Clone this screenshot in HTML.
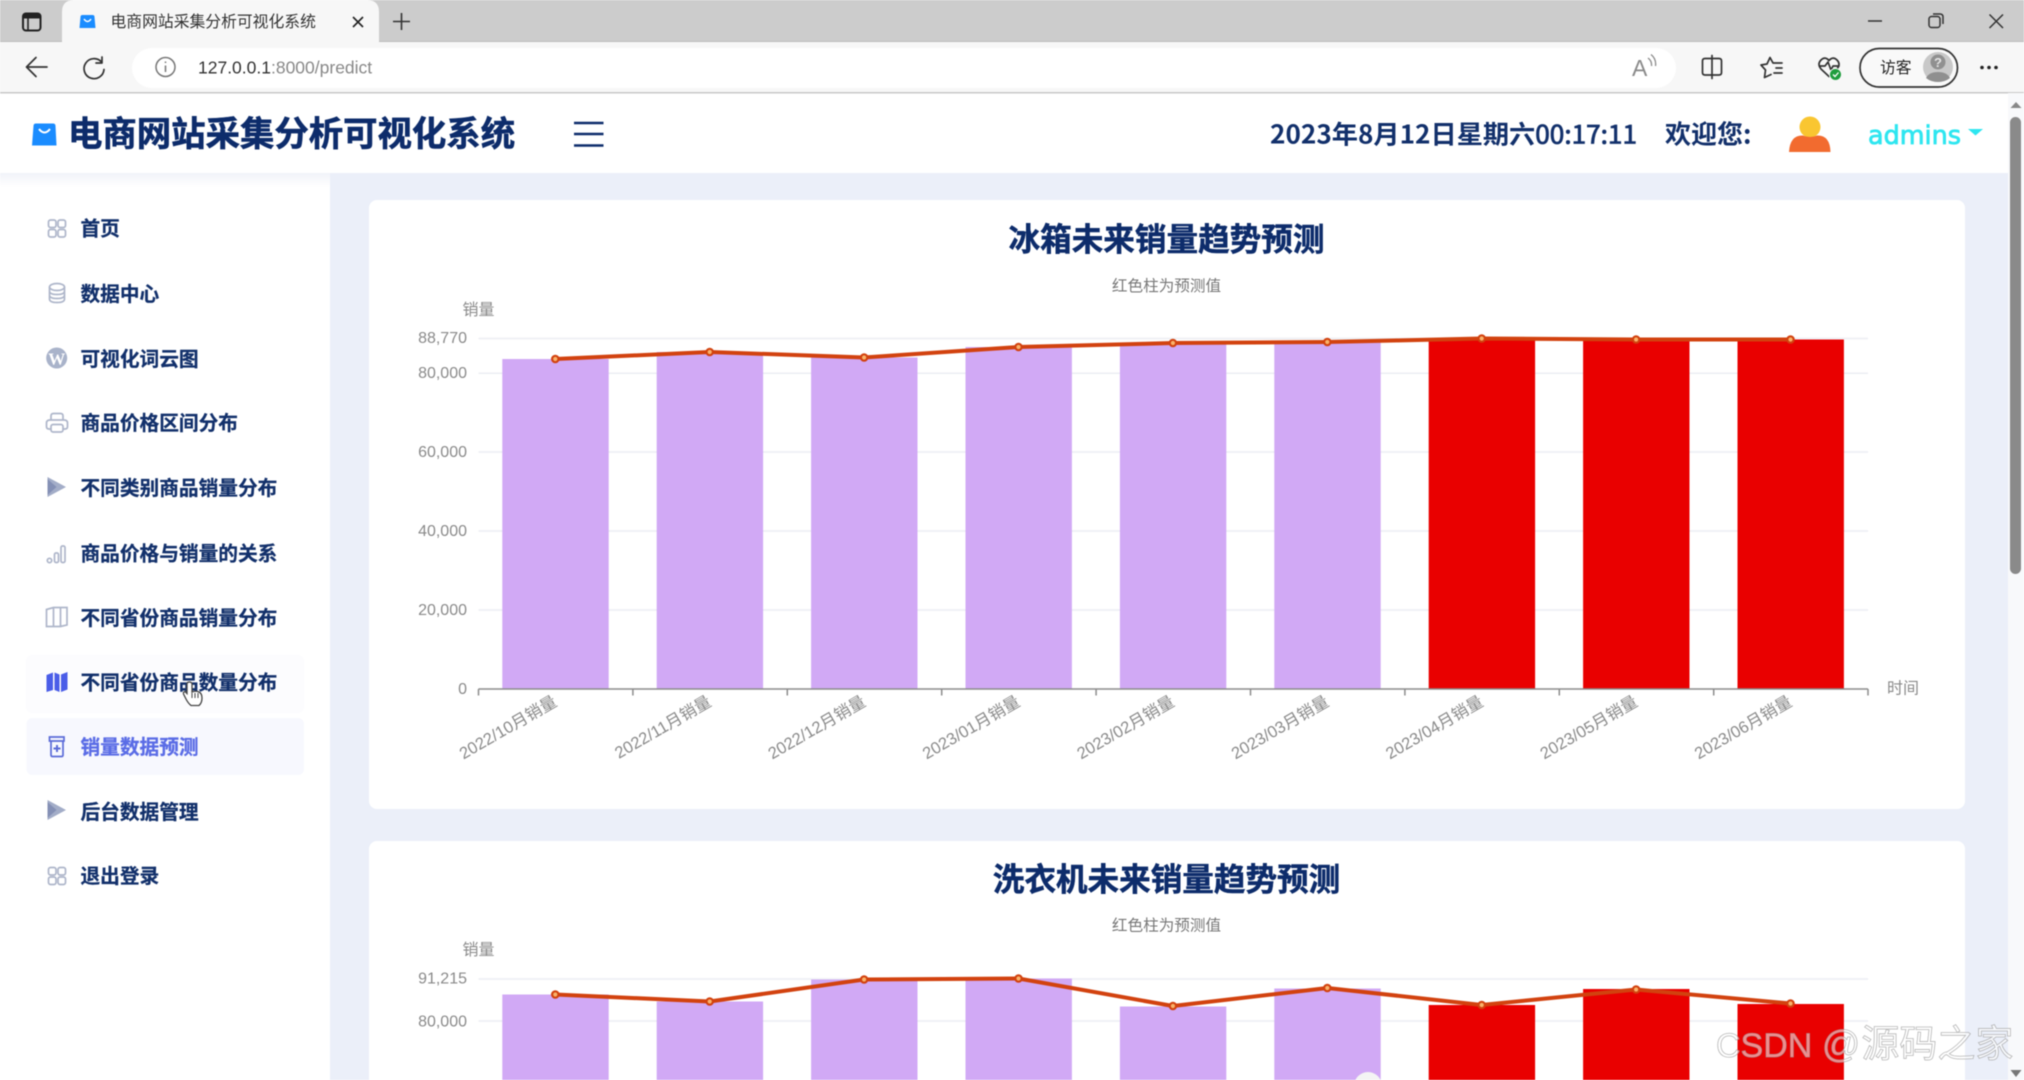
<!DOCTYPE html>
<html lang="zh-CN">
<head>
<meta charset="utf-8">
<title>电商网站采集分析可视化系统</title>
<style>
html,body{margin:0;padding:0;width:2024px;height:1080px;overflow:hidden;background:#fff}
svg{display:block;position:absolute;left:0;top:0;filter:blur(.45px)}
text{font-family:"Liberation Sans","Noto Sans CJK SC",sans-serif}
.cjk{font-family:"Noto Sans CJK SC","Liberation Sans",sans-serif}
.nav{font-family:"Noto Sans CJK SC",sans-serif;font-size:19.7px;font-weight:700;fill:#12306b;stroke:#12306b;stroke-width:.25}
.ttl{font-family:"Noto Sans CJK SC",sans-serif;font-size:31.6px;font-weight:700;fill:#0d2c6b;text-anchor:middle;stroke:#0d2c6b;stroke-width:.5}
.sub{font-size:15.6px;fill:#777;text-anchor:middle}
.ax{font-size:16px;fill:#8a8a8a}
.yl{font-size:16px;fill:#8a8a8a;text-anchor:end}
.xl{font-size:16.5px;fill:#8a8a8a;text-anchor:end}
.g{stroke:#eceef3;stroke-width:1.5}
.ic{fill:none;stroke:#aeb6ca;stroke-width:1.7}
.tb{fill:none;stroke:#333;stroke-width:1.7;stroke-linecap:round;stroke-linejoin:round}
.p{fill:#d1a9f5}.r{fill:#e90000}
.ln{fill:none;stroke:#d2420f;stroke-width:4;stroke-linejoin:round}
.d{fill:#f8b26a;stroke:#d2420f;stroke-width:2.2}
</style>
</head>
<body>
<svg width="2024" height="1080" viewBox="0 0 2024 1080" xmlns="http://www.w3.org/2000/svg">
<defs>
<linearGradient id="hs" x1="0" y1="0" x2="0" y2="1"><stop offset="0" stop-color="#f1f3f9"/><stop offset="1" stop-color="#fff"/></linearGradient>
</defs>

<!-- page background -->
<rect x="0" y="93" width="2024" height="987" fill="#ebeff9"/>
<rect x="0" y="173" width="330" height="907" fill="#fff"/>
<rect x="0" y="173" width="330" height="14" fill="url(#hs)"/>
<rect x="0" y="93" width="2008" height="80" fill="#fff"/>

<!-- browser: tab strip -->
<rect x="0" y="0" width="2024" height="42" fill="#cccccc"/>
<rect x="0" y="41" width="2024" height="1" fill="#bdbdbd"/>
<path d="M62 42V12Q62 0 74 0H367Q379 0 379 12V42Z" fill="#f7f7f7"/>
<rect x="23" y="13.500" width="17.500" height="17" rx="3" fill="none" stroke="#222" stroke-width="2"/>
<rect x="23" y="13.500" width="17.500" height="5" fill="#222"/>
<line x1="28" y1="18" x2="28" y2="30" stroke="#222" stroke-width="1.600"/>
<path d="M80.500 17Q80.500 15 82.500 15H92.500Q94.500 15 94.500 17L95.500 28H79.500Z" fill="#1a8cff"/>
<path d="M84 19Q87.500 24 91 19" fill="none" stroke="#fff" stroke-width="1.500"/>
<text class="cjk" x="110.500" y="27" font-size="15.800" fill="#333">电商网站采集分析可视化系统</text>
<path d="M353 17L363 27M363 17L353 27" stroke="#222" stroke-width="1.600" fill="none"/>
<path d="M393 21.500H410M401.500 13V30" stroke="#333" stroke-width="1.600" fill="none"/>
<path d="M1868 21H1882" stroke="#333" stroke-width="1.500"/>
<rect x="1929" y="16.500" width="11" height="11" rx="2.500" fill="none" stroke="#333" stroke-width="1.500"/>
<path d="M1933 14H1940Q1943 14 1943 17V24" fill="none" stroke="#333" stroke-width="1.500"/>
<path d="M1989.500 14.500L2003 28M2003 14.500L1989.500 28" stroke="#333" stroke-width="1.500" fill="none"/>

<!-- browser: toolbar -->
<rect x="0" y="42" width="2024" height="51" fill="#f7f7f7"/>
<rect x="0" y="92" width="2024" height="1.500" fill="#c9c9c9"/>
<path d="M47 67H27M36 57.500L26.500 67L36 76.500" class="tb" stroke-width="1.800"/>
<path d="M101.500 62A10 10 0 1 0 104 69.500M102 57V63H96" class="tb" stroke-width="1.500"/>
<rect x="132" y="48" width="1544" height="40" rx="20" fill="#fff"/>
<circle cx="165.500" cy="67" r="9.500" fill="none" stroke="#777" stroke-width="1.500"/>
<path d="M165.500 65.500V72M165.500 61.500V63" stroke="#777" stroke-width="1.500"/>
<text x="198" y="73.500" font-size="17.500" fill="#333">127.0.0.1<tspan fill="#888">:8000/predict</tspan></text>
<text x="1632" y="76" font-size="23" fill="#8a8a8a">A</text>
<path d="M1648 58Q1652 61 1651.500 66M1651 54.500Q1656.500 59 1655.500 66" fill="none" stroke="#8a8a8a" stroke-width="1.300"/>
<path d="M1712 58.500H1705Q1702.500 58.500 1702.500 61V72.500Q1702.500 75 1705 75H1712M1712 55.500V78.500M1712 58.500H1719Q1721.500 58.500 1721.500 61V72.500Q1721.500 75 1719 75H1712" class="tb" stroke-width="1.500"/>
<path d="M1776 63H1773L1770 57.500L1767 64L1761 65L1765.500 70L1764.500 77.500L1771 74.500M1776 63H1782M1776 68H1782M1774 73H1782" class="tb" stroke-width="1.500"/>
<path d="M1829 60.500Q1833 56 1837 60Q1841 64 1837 69L1829 76.500L1821 69Q1817 64 1821 60Q1825 56 1829 60.500ZM1819.500 66H1825L1828 62L1831 70L1833 66H1839" class="tb" stroke-width="1.500"/>
<circle cx="1835.500" cy="74.500" r="6" fill="#1f9d3d" stroke="#f7f7f7" stroke-width="1"/>
<path d="M1833 74.500L1835 76.500L1838.500 72.500" fill="none" stroke="#fff" stroke-width="1.300"/>
<rect x="1860" y="48.500" width="97.500" height="38.500" rx="19.200" fill="#f9f9f9" stroke="#333" stroke-width="1.700"/>
<text class="cjk" x="1880" y="73" font-size="15.800" fill="#222">访客</text>
<circle cx="1938" cy="67" r="15" fill="#c8c8c8"/>
<circle cx="1938" cy="62" r="7.500" fill="#909090"/>
<path d="M1926 78Q1929 72 1938 72Q1947 72 1950 78Q1945 82 1938 82Q1931 82 1926 78Z" fill="#8f8f8f"/>
<text x="1938" y="67" font-size="13" font-weight="700" fill="#e4e4e4" text-anchor="middle">?</text>
<circle cx="1982" cy="67.500" r="1.800" fill="#222"/><circle cx="1989" cy="67.500" r="1.800" fill="#222"/><circle cx="1996" cy="67.500" r="1.800" fill="#222"/>

<!-- page header -->
<path d="M33.500 126Q33.500 123.500 36 123.500H53Q55.500 123.500 55.500 126L56.500 145.500H32Z" fill="#1a8cff"/>
<path d="M39 129Q44.500 136 50 129" fill="none" stroke="#fff" stroke-width="2"/>
<text class="cjk" x="68" y="146" font-size="34.400" font-weight="700" fill="#0d2c6b" stroke="#0d2c6b" stroke-width=".6">电商网站采集分析可视化系统</text>
<path d="M574 123H603.500M574 134H603.500M574 145.500H603.500" stroke="#0d2c6b" stroke-width="2.400" fill="none"/>
<text class="cjk" x="1270" y="143.500" font-size="25.500" font-weight="700" fill="#12306b" textLength="367" lengthAdjust="spacingAndGlyphs">2023年8月12日星期六<tspan font-weight="400" stroke="#12306b" stroke-width=".75">00:17:11</tspan></text>
<text class="cjk" x="1665" y="143.500" font-size="26" font-weight="700" fill="#12306b">欢迎您:</text>
<circle cx="1810" cy="127" r="10.500" fill="#f9c631"/>
<path d="M1789 152Q1790 135 1803 135.500Q1810 138.500 1817 135.500Q1830 135 1830.500 152Z" fill="#f26b2f"/>
<text x="1868" y="144" font-size="26" fill="#2ee6f0" stroke="#2ee6f0" stroke-width=".8" style="font-family:'DejaVu Sans',sans-serif" textLength="93" lengthAdjust="spacingAndGlyphs">admins</text>
<path d="M1968 129H1983L1975.500 135.500Z" fill="#2ee6f0"/>

<!-- sidebar hover and active rows -->
<rect x="26" y="655" width="278" height="58" rx="6" fill="#fcfcfe"/>
<rect x="26.500" y="718" width="277.500" height="57" rx="6" fill="#f7f8fe"/>

<!-- sidebar icons -->
<g class="ic">
<rect x="48.500" y="220" width="7.500" height="7.500" rx="2"/><rect x="58" y="220" width="7.500" height="7.500" rx="2"/><rect x="48.500" y="229.500" width="7.500" height="7.500" rx="2"/><rect x="58" y="229.500" width="7.500" height="7.500" rx="2"/>
<ellipse cx="57" cy="287" rx="7.500" ry="3.500"/>
<path d="M49.500 287V299Q49.500 302.500 57 302.500Q64.500 302.500 64.500 299V287M49.500 291Q49.500 294.500 57 294.500Q64.500 294.500 64.500 291M49.500 295Q49.500 298.500 57 298.500Q64.500 298.500 64.500 295"/>
<path d="M51 420V416Q51 413.500 53.500 413.500H60.500Q63 413.500 63 416V420M51 429H49Q46.500 429 46.500 426.500V423Q46.500 420 50 420H64Q67.500 420 67.500 423V426.500Q67.500 429 65 429H63"/>
<rect x="51" y="424.500" width="12" height="7.500" rx="2"/>
<circle cx="49.500" cy="560.500" r="2.200"/><rect x="54.500" y="553" width="4" height="9.500" rx="1.500"/><rect x="61" y="546" width="4" height="16.500" rx="1.500"/>
<path d="M46.500 609.500L53.500 607.500H60.500L67 607.500V625L60.500 626.500H53.500L46.500 626.500ZM53.500 607.500V626.500M60.500 607.500V626.500"/>
<rect x="48.500" y="867.500" width="7.500" height="7.500" rx="2"/><rect x="58" y="867.500" width="7.500" height="7.500" rx="2"/><rect x="48.500" y="877" width="7.500" height="7.500" rx="2"/><rect x="58" y="877" width="7.500" height="7.500" rx="2"/>
</g>
<circle cx="56.700" cy="358" r="10.500" fill="#a9b3ca"/>
<text x="56.700" y="364.500" font-size="17" font-weight="700" fill="#fff" text-anchor="middle" style="font-family:'Liberation Serif',serif">W</text>
<path d="M47.500 477L66 487L47.500 497Z" fill="#a3adc8"/><path d="M47.500 479L56.500 487L47.500 495Z" fill="#8490b5"/>
<path d="M47.500 800L66 810L47.500 820Z" fill="#a3adc8"/><path d="M47.500 802L56.500 810L47.500 818Z" fill="#8490b5"/>
<path d="M46.500 675L53 672.500V690L46.500 692ZM54.500 672.500L59.500 674.500V692L54.500 690ZM61 674.500L67.500 672V689.500L61 692Z" fill="#4a5de8"/>
<path d="M49.500 737H64V741H49.500ZM51 741V755Q51 756.500 52.500 756.500H61.500Q63 756.500 63 755V741" fill="none" stroke="#5b6bd8" stroke-width="1.700"/>
<path d="M57 745V752M53.500 748.500H60.500" stroke="#5b6bd8" stroke-width="2"/>

<!-- sidebar text -->
<text class="nav" x="80.500" y="235.500">首页</text>
<text class="nav" x="80.500" y="301">数据中心</text>
<text class="nav" x="80.500" y="366">可视化词云图</text>
<text class="nav" x="80.500" y="430">商品价格区间分布</text>
<text class="nav" x="80.500" y="495">不同类别商品销量分布</text>
<text class="nav" x="80.500" y="560.500">商品价格与销量的关系</text>
<text class="nav" x="80.500" y="625">不同省份商品销量分布</text>
<text class="nav" x="80.500" y="689.500">不同省份商品数量分布</text>
<text class="nav" x="80.500" y="754" style="fill:#5a6ce6;stroke:#5a6ce6">销量数据预测</text>
<text class="nav" x="80.500" y="819">后台数据管理</text>
<text class="nav" x="80.500" y="883">退出登录</text>

<!-- card 1 -->
<rect x="369" y="200" width="1596" height="609" rx="8" fill="#fff"/>
<text class="ttl" x="1166.500" y="250.500">冰箱未来销量趋势预测</text>
<text class="sub" x="1166.500" y="291">红色柱为预测值</text>
<text class="ax" x="462.500" y="315">销量</text>
<line class="g" x1="478.500" y1="338.500" x2="1868" y2="338.500"/>
<line class="g" x1="478.500" y1="373.300" x2="1868" y2="373.300"/>
<line class="g" x1="478.500" y1="452" x2="1868" y2="452"/>
<line class="g" x1="478.500" y1="531" x2="1868" y2="531"/>
<line class="g" x1="478.500" y1="610" x2="1868" y2="610"/>
<text class="yl" x="467" y="343">88,770</text>
<text class="yl" x="467" y="378">80,000</text>
<text class="yl" x="467" y="457">60,000</text>
<text class="yl" x="467" y="536">40,000</text>
<text class="yl" x="467" y="615">20,000</text>
<text class="yl" x="467" y="694">0</text>
<g>
<rect class="p" x="502.300" y="359" width="106.400" height="330"/>
<rect class="p" x="656.700" y="352" width="106.400" height="337"/>
<rect class="p" x="811.100" y="357.500" width="106.400" height="331.500"/>
<rect class="p" x="965.500" y="347" width="106.400" height="342"/>
<rect class="p" x="1119.900" y="343" width="106.400" height="346"/>
<rect class="p" x="1274.300" y="342" width="106.400" height="347"/>
<rect class="r" x="1428.700" y="338.500" width="106.400" height="350.500"/>
<rect class="r" x="1583.100" y="339.500" width="106.400" height="349.500"/>
<rect class="r" x="1737.500" y="339.500" width="106.400" height="349.500"/>
</g>
<path d="M478.500 689H1868M478.500 689V695.500M632.900 689V695.500M787.300 689V695.500M941.700 689V695.500M1096.100 689V695.500M1250.500 689V695.500M1404.900 689V695.500M1559.300 689V695.500M1713.700 689V695.500M1868 689V695.500" stroke="#8c8c8c" stroke-width="1.500" fill="none"/>
<path class="ln" d="M555.300 359L709.700 352L864.100 357.500L1018.500 347L1172.900 343L1327.300 342L1481.700 338.500L1636.100 339.500L1790.500 339.500"/>
<circle class="d" cx="555.300" cy="359" r="3.200"/><circle class="d" cx="709.700" cy="352" r="3.200"/><circle class="d" cx="864.100" cy="357.500" r="3.200"/><circle class="d" cx="1018.500" cy="347" r="3.200"/><circle class="d" cx="1172.900" cy="343" r="3.200"/><circle class="d" cx="1327.300" cy="342" r="3.200"/><circle class="d" cx="1481.700" cy="338.500" r="3.200"/><circle class="d" cx="1636.100" cy="339.500" r="3.200"/><circle class="d" cx="1790.500" cy="339.500" r="3.200"/>
<text class="ax" x="1887" y="693.500">时间</text>
<text class="xl" transform="translate(558 705) rotate(-30)">2022/10月销量</text>
<text class="xl" transform="translate(712.400 705) rotate(-30)">2022/11月销量</text>
<text class="xl" transform="translate(866.800 705) rotate(-30)">2022/12月销量</text>
<text class="xl" transform="translate(1021.200 705) rotate(-30)">2023/01月销量</text>
<text class="xl" transform="translate(1175.600 705) rotate(-30)">2023/02月销量</text>
<text class="xl" transform="translate(1330 705) rotate(-30)">2023/03月销量</text>
<text class="xl" transform="translate(1484.400 705) rotate(-30)">2023/04月销量</text>
<text class="xl" transform="translate(1638.800 705) rotate(-30)">2023/05月销量</text>
<text class="xl" transform="translate(1793.200 705) rotate(-30)">2023/06月销量</text>

<!-- card 2 -->
<rect x="369" y="841" width="1596" height="260" rx="8" fill="#fff"/>
<text class="ttl" x="1166.500" y="890.500">洗衣机未来销量趋势预测</text>
<text class="sub" x="1166.500" y="930.500">红色柱为预测值</text>
<text class="ax" x="462.500" y="955">销量</text>
<line class="g" x1="478.500" y1="979" x2="1868" y2="979"/>
<line class="g" x1="478.500" y1="1021" x2="1868" y2="1021"/>
<text class="yl" x="467" y="983.500">91,215</text>
<text class="yl" x="467" y="1026.500">80,000</text>
<rect class="p" x="502.300" y="994.500" width="106.400" height="90"/>
<rect class="p" x="656.700" y="1001.500" width="106.400" height="90"/>
<rect class="p" x="811.100" y="979.500" width="106.400" height="110"/>
<rect class="p" x="965.500" y="978.500" width="106.400" height="110"/>
<rect class="p" x="1119.900" y="1006.500" width="106.400" height="90"/>
<rect class="p" x="1274.300" y="988.500" width="106.400" height="100"/>
<rect class="r" x="1428.700" y="1005" width="106.400" height="90"/>
<rect class="r" x="1583.100" y="989" width="106.400" height="100"/>
<rect class="r" x="1737.500" y="1004" width="106.400" height="90"/>
<path class="ln" d="M555.300 994.500L709.700 1001.500L864.100 979.500L1018.500 978.500L1172.900 1006L1327.300 988L1481.700 1005L1636.100 989.500L1790.500 1003.500"/>
<circle class="d" cx="555.300" cy="994.500" r="3.200"/><circle class="d" cx="709.700" cy="1001.500" r="3.200"/><circle class="d" cx="864.100" cy="979.500" r="3.200"/><circle class="d" cx="1018.500" cy="978.500" r="3.200"/><circle class="d" cx="1172.900" cy="1006" r="3.200"/><circle class="d" cx="1327.300" cy="988" r="3.200"/><circle class="d" cx="1481.700" cy="1005" r="3.200"/><circle class="d" cx="1636.100" cy="989.500" r="3.200"/><circle class="d" cx="1790.500" cy="1003.500" r="3.200"/>
<circle cx="1368" cy="1086" r="14" fill="#f4f4f4"/>

<!-- scrollbar -->
<rect x="2008" y="93" width="16" height="987" fill="#f8f9fb"/>
<path d="M2010.500 108L2016 102L2021.500 108Z" fill="#888"/>
<rect x="2010" y="117" width="11" height="457" rx="5.500" fill="#8a8a8a"/>
<path d="M2010.500 1070L2016 1077L2021.500 1070Z" fill="#777"/>

<!-- watermark -->
<text x="1716" y="1057" font-size="34" fill="#fff" fill-opacity=".55" stroke="#a0a0a0" stroke-opacity=".75" stroke-width=".8">CSDN <tspan font-size="38">@</tspan><tspan font-size="38" dx="1">源码之家</tspan></text>

<!-- cursor -->
<path d="M187 684Q187 682 189.500 682Q191.500 682 192 684V692Q196 690.500 199 692Q202 693.500 202 698Q202 703 199 705.500H191Q188 703 186 699L183.500 694Q183 692 185 691.500L187 693.500Z" fill="#fff" stroke="#444" stroke-width="1.300"/>
<path d="M192 693V698M195 693V698M198 693V698" stroke="#444" stroke-width="1" fill="none"/>
</svg>
</body>
</html>
